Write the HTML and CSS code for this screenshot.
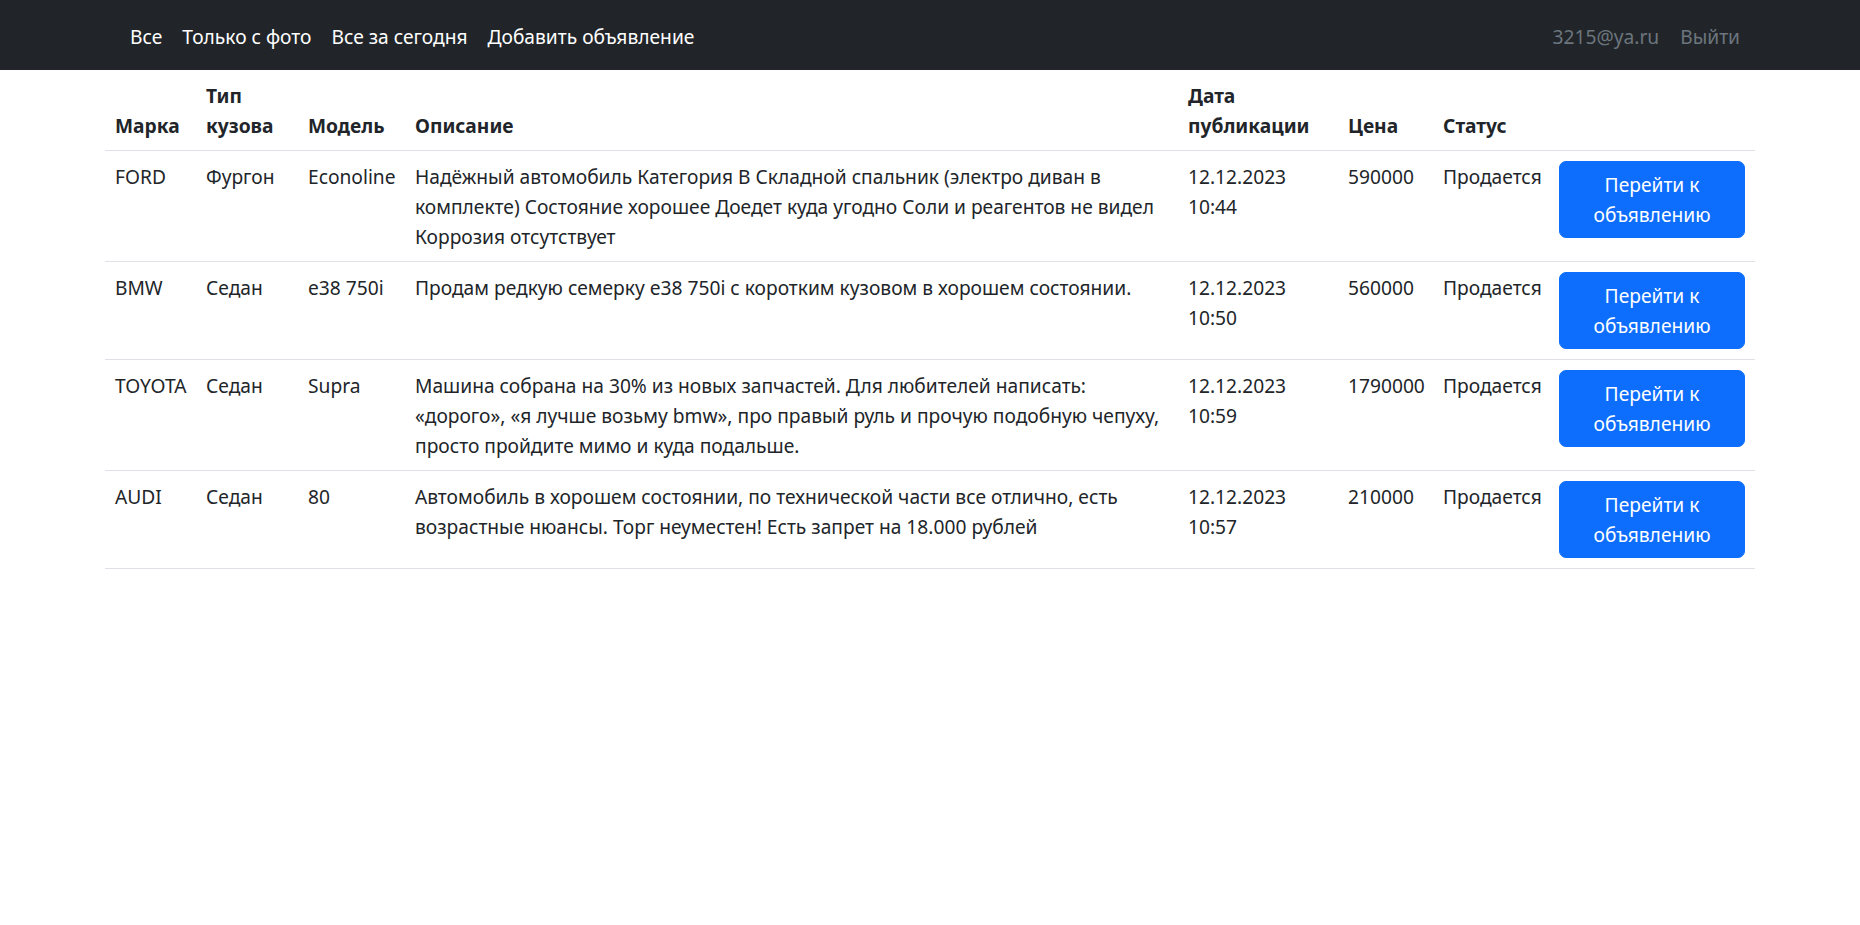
FILE: index.html
```html
<!DOCTYPE html>
<html lang="ru">
<head>
<meta charset="utf-8">
<title>Объявления</title>
<link rel="stylesheet" href="styles.css">
</head>
<body>
<nav class="navbar">
  <div class="nav-container">
    <ul class="nav-left">
      <li><a class="nav-link" href="#">Все</a></li>
      <li><a class="nav-link" href="#">Только с фото</a></li>
      <li><a class="nav-link" href="#">Все за сегодня</a></li>
      <li><a class="nav-link" href="#">Добавить объявление</a></li>
    </ul>
    <div class="nav-right">
      <span class="nav-user">3215@ya.ru</span>
      <a class="nav-user" href="#">Выйти</a>
    </div>
  </div>
</nav>
<main class="container">
  <table class="ads">
    <colgroup>
      <col class="c-brand">
      <col class="c-body">
      <col class="c-model">
      <col class="c-desc">
      <col class="c-date">
      <col class="c-price">
      <col class="c-status">
      <col class="c-action">
    </colgroup>
    <thead>
      <tr>
        <th>Марка</th>
        <th>Тип кузова</th>
        <th>Модель</th>
        <th>Описание</th>
        <th>Дата публикации</th>
        <th>Цена</th>
        <th>Статус</th>
        <th></th>
      </tr>
    </thead>
    <tbody>
      <tr>
        <td>FORD</td>
        <td>Фургон</td>
        <td>Econoline</td>
        <td>Надёжный автомобиль Категория В Складной спальник (электро диван в комплекте) Состояние хорошее Доедет куда угодно Соли и реагентов не видел Коррозия отсутствует</td>
        <td>12.12.2023 10:44</td>
        <td>590000</td>
        <td>Продается</td>
        <td><a class="btn" href="#">Перейти к объявлению</a></td>
      </tr>
      <tr>
        <td>BMW</td>
        <td>Седан</td>
        <td>e38 750i</td>
        <td>Продам редкую семерку e38 750i с коротким кузовом в хорошем состоянии.</td>
        <td>12.12.2023 10:50</td>
        <td>560000</td>
        <td>Продается</td>
        <td><a class="btn" href="#">Перейти к объявлению</a></td>
      </tr>
      <tr>
        <td>TOYOTA</td>
        <td>Седан</td>
        <td>Supra</td>
        <td>Машина собрана на 30% из новых запчастей. Для любителей написать: «дорого», «я лучше возьму bmw», про правый руль и прочую подобную чепуху, просто пройдите мимо и куда подальше.</td>
        <td>12.12.2023 10:59</td>
        <td>1790000</td>
        <td>Продается</td>
        <td><a class="btn" href="#">Перейти к объявлению</a></td>
      </tr>
      <tr>
        <td>AUDI</td>
        <td>Седан</td>
        <td>80</td>
        <td>Автомобиль в хорошем состоянии, по технической части все отлично, есть возрастные нюансы. Торг неуместен! Есть запрет на 18.000 рублей</td>
        <td>12.12.2023 10:57</td>
        <td>210000</td>
        <td>Продается</td>
        <td><a class="btn" href="#">Перейти к объявлению</a></td>
      </tr>
    </tbody>
  </table>
</main>
</body>
</html>
```

FILE: styles.css
```css
* {
  box-sizing: border-box;
}

body {
  margin: 0;
  font-family: "Noto Sans", "Open Sans", sans-serif;
  font-size: 19.2px;
  line-height: 30px;
  color: #212529;
  background: #fff;
}

.navbar {
  background: #212529;
  height: 70px;
}

.nav-container {
  width: 1650px;
  height: 100%;
  margin: 0 auto;
  padding: 0 15px;
  display: flex;
  align-items: center;
  justify-content: space-between;
}

.nav-left {
  list-style: none;
  margin: 0;
  padding: 0;
  display: flex;
}

.nav-link {
  display: block;
  padding: 12px 10px 8px;
  color: #fff;
  text-decoration: none;
}

.nav-right {
  display: flex;
  gap: 21px;
  padding-top: 4px;
}

.nav-user {
  color: #6c757d;
  text-decoration: none;
}

.container {
  width: 1650px;
  margin: 0 auto;
}

.ads {
  width: 100%;
  border-collapse: collapse;
  table-layout: fixed;
  vertical-align: top;
}

.c-brand { width: 91px; }
.c-body { width: 102px; }
.c-model { width: 107px; }
.c-desc { width: 773px; }
.c-date { width: 160px; }
.c-price { width: 95px; }
.c-status { width: 116px; }
.c-action { width: 206px; }

.ads th,
.ads td {
  padding: 11px 10px 9px;
  border-bottom: 1px solid #dee2e6;
  text-align: left;
}

.ads thead th {
  vertical-align: bottom;
  font-weight: 700;
}

.ads td {
  vertical-align: top;
}

.ads td:last-child {
  padding-top: 10px;
  padding-bottom: 10px;
}

.btn {
  display: block;
  padding: 7.5px 15px;
  border: 1px solid #0d6efd;
  border-radius: 7px;
  background: #0d6efd;
  color: #fff;
  text-align: center;
  text-decoration: none;
}
```
